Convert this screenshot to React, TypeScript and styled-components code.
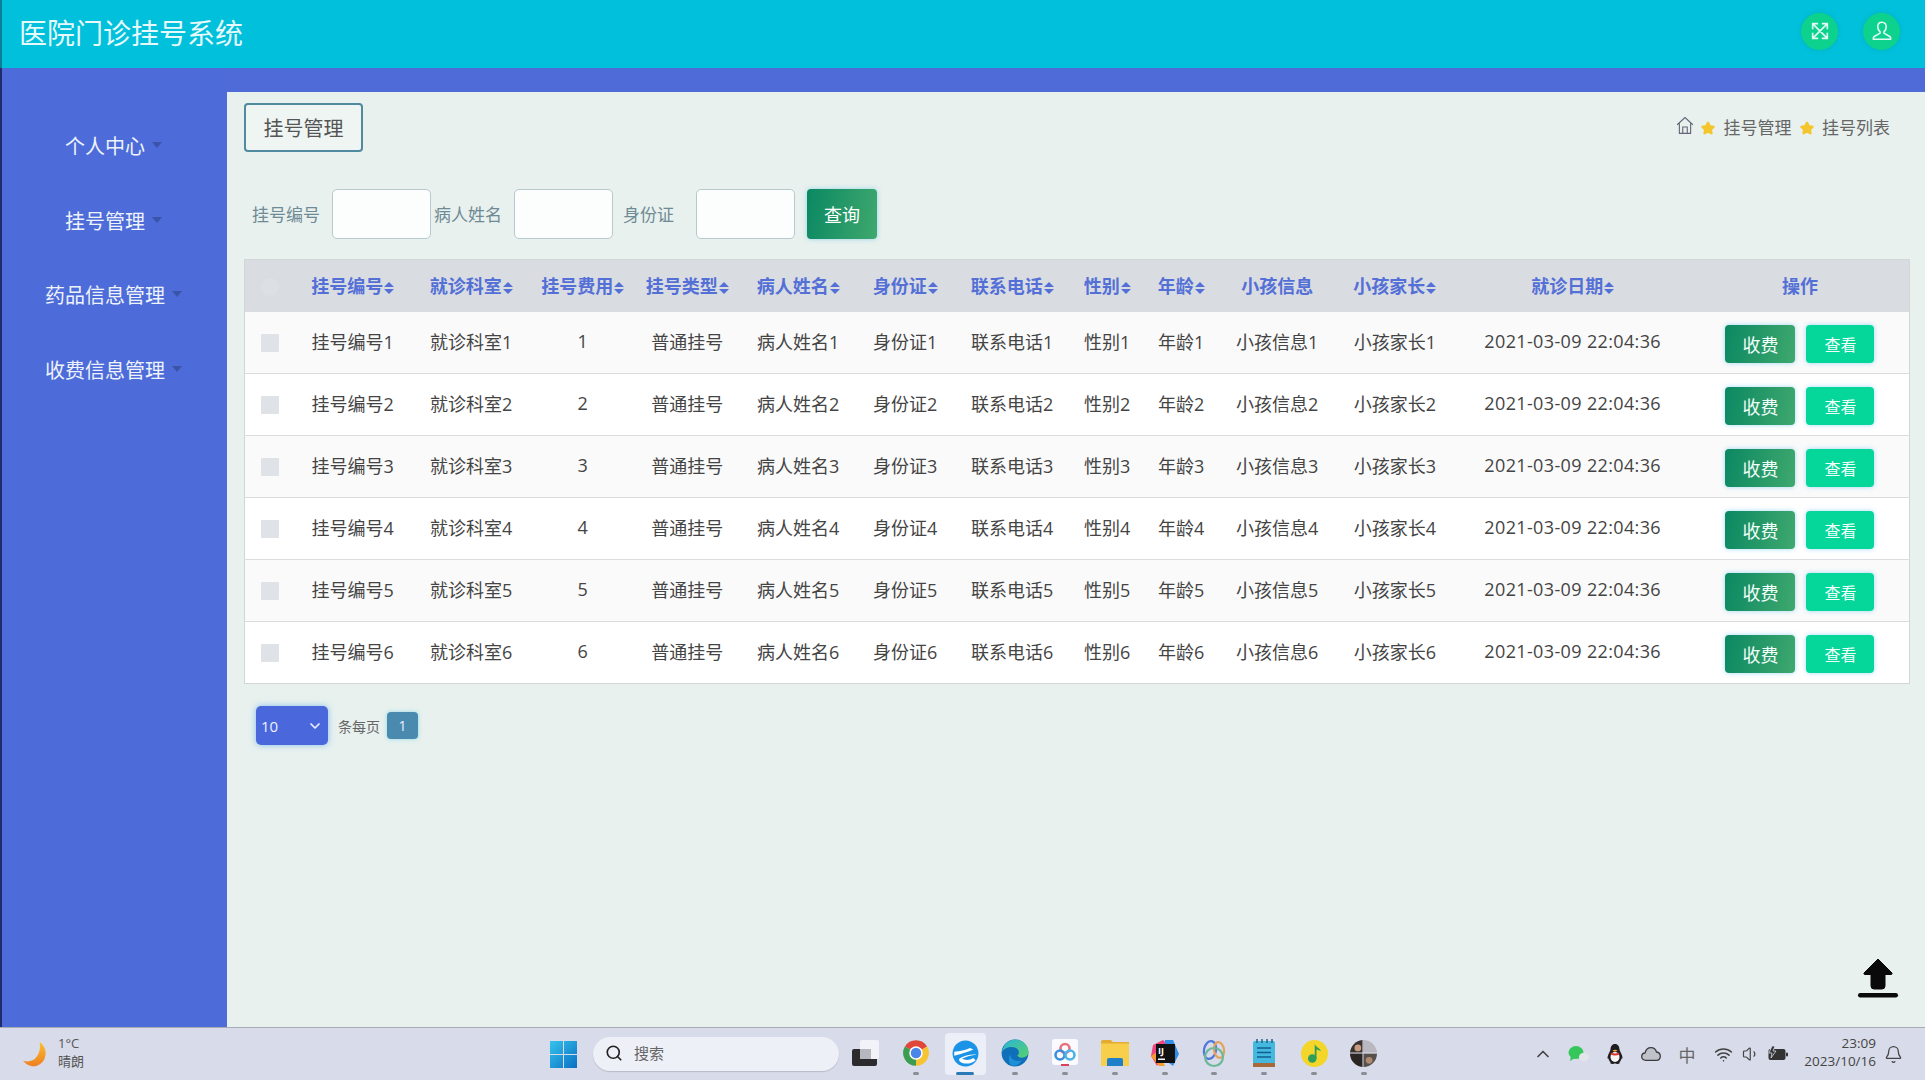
import React from "react";
import styled, { createGlobalStyle } from "styled-components";
import { Bell, ChevronDown, ChevronUp, Search, Volume1, Wifi } from "lucide-react";

const Global = createGlobalStyle`
  html, body { margin: 0; padding: 0; }
  body { width: 1925px; height: 1080px; overflow: hidden; font-family: "Open Sans", "Noto Sans CJK SC", sans-serif; }
  * { box-sizing: border-box; }
`;

const Page = styled.div`
  width: 1925px; height: 1080px; display: flex; flex-direction: column;
  background: #e8f1ee;
`;
const Header = styled.header`
  height: 68px; flex: none; display: flex; align-items: center; justify-content: space-between;
  background: #00c0dc; border-left: 2px solid #0a7f96; padding: 0 25px 0 17px;
`;
const Title = styled.h1`
  margin: 0 0 2px; font-size: 28px; font-weight: 400; color: #e6fafb; line-height: 38px;
`;
const HeaderActions = styled.div`
  display: flex; gap: 25px; margin-bottom: 6px;
`;
const RoundButton = styled.div`
  width: 37px; height: 37px; border-radius: 50%; background: #0cd28e;
  display: flex; align-items: center; justify-content: center;
  box-shadow: 0 0 4px rgba(10,170,150,.6);
`;
const Body = styled.div`
  flex: 1; min-height: 0; display: flex;
`;
const Sidebar = styled.nav`
  width: 227px; flex: none; background: #4d6cd9; border-left: 2px solid #1d2c6e;
  padding: 42px 0 0 0; display: flex; flex-direction: column;
`;
const MenuItem = styled.div`
  height: 74.5px; display: flex; align-items: center; justify-content: center; gap: 7px;
  color: #eef3fb; font-size: 20px; line-height: 28px; padding-right: 2px;
`;
const MenuCaret = styled.span`
  width: 0; height: 0; border-left: 5px solid transparent; border-right: 5px solid transparent;
  border-top: 6px solid #3a55a8; margin-bottom: 4px;
`;
const Main = styled.main`
  flex: 1; min-width: 0; display: flex; flex-direction: column; position: relative;
`;
const Strip = styled.div`
  height: 24px; background: #4f6bd8; flex: none;
`;
const Content = styled.div`
  flex: 1; padding: 11px 16px 0 17px; background: #e8f1ee;
`;
const PageHead = styled.div`
  display: flex; align-items: center; justify-content: space-between; height: 49px;
`;
const Tag = styled.div`
  width: 119px; height: 49px; display: flex; align-items: center; justify-content: center;
  border: 2px solid #4f8a9e; border-radius: 4px; background: #eef5f2;
  font-size: 20px; color: #555;
`;
const Crumbs = styled.div`
  display: flex; align-items: center; font-size: 17px; color: #666; padding-right: 19px;
`;
const HomeSlot = styled.span`
  display: flex; margin: 0 7px 4px 0;
`;
const CrumbText = styled.span`
  margin: 0 8px 0 8.500px; line-height: 20px;
  &:last-child { margin-right: 0; }
`;
const SearchRow = styled.div`
  display: flex; align-items: center; margin-top: 37px; padding-left: 8px; height: 50px;
`;
const FieldLabel = styled.label<{ $ml?: number; $w: number }>`
  font-size: 17px; color: #6f8a94; white-space: nowrap; margin-left: ${(p) => p.$ml ?? 0}px;
  width: ${(p) => p.$w}px; margin-right: 12px; line-height: 24px; padding-top: 2px;
`;
const FieldInput = styled.input`
  width: 99px; height: 50px; border: 1px solid #b9c8cc; border-radius: 5px; background: #fcfefd;
  padding: 0 8px; outline: none; flex: none;
`;
const PrimaryButton = styled.button`
  width: 70px; height: 50px; margin-left: 12px; border: 0; border-radius: 4px;
  background: linear-gradient(100deg, #0b8862, #3fa86e); color: #fff; font: inherit; font-size: 18px;
  box-shadow: 0 0 5px rgba(80,190,230,.55);
`;
const Table = styled.table`
  width: 1665px; margin-top: 20px; border-collapse: collapse; table-layout: fixed; background: #fff;
  border: 1px solid #d2d6d8; font-size: 18px; color: #444;
`;
const Col = styled.col<{ $w: number }>`
  width: ${(p) => p.$w}px;
`;
const HeadRow = styled.tr`
  height: 52px; background: #d9dde2;
`;
const Th = styled.th`
  padding: 0 0 1px; font-weight: 700; color: #5470d6; text-align: center; font-size: 18px; white-space: nowrap;
`;
const Row = styled.tr<{ $odd: boolean }>`
  height: 62px; background: ${(p) => (p.$odd ? "#fafafa" : "#fff")}; border-top: 1px solid #dadcde;
`;
const Td = styled.td<{ $date?: boolean }>`
  padding: 0 0 4px; text-align: center; white-space: nowrap; letter-spacing: ${(p) => (p.$date ? "0.36px" : "0")};
`;
const SortMark = styled.span`
  display: inline-flex; flex-direction: column; gap: 1.500px; vertical-align: 6px; margin-left: 1px;
  &::before, &::after {
    content: ""; width: 0; height: 0; border-left: 5px solid transparent; border-right: 5px solid transparent;
  }
  &::before { border-bottom: 5px solid #5470d6; }
  &::after { border-top: 5px solid #5470d6; }
`;
const Check = styled.span<{ $faint?: boolean }>`
  display: inline-block; width: 18px; height: 18px; vertical-align: middle; margin-left: 2px;
  border-radius: ${(p) => (p.$faint ? "50%" : "1px")};
  background: ${(p) => (p.$faint ? "#dcdfe4" : "#dfe2e7")};
`;
const RowActions = styled.div`
  display: flex; justify-content: center; gap: 11px; margin-top: 7px;
`;
const ActionButton = styled.button<{ $kind: "pay" | "view" }>`
  height: 38px; border: 0; border-radius: 4px; color: #f2fffa; padding: 0; font-family: inherit;
  width: ${(p) => (p.$kind === "pay" ? 70 : 68)}px;
  font-size: ${(p) => (p.$kind === "pay" ? 18 : 16)}px;
  background: ${(p) => (p.$kind === "pay" ? "linear-gradient(100deg, #0b8862, #3fa86e)" : "#05d69a")};
  box-shadow: 0 0 5px rgba(90,190,240,.55);
`;
const Pager = styled.div`
  display: flex; align-items: center; margin: 22px 0 0 12px; height: 39px;
`;
const PageSize = styled.div`
  width: 72px; height: 39px; border-radius: 5px; background: #4a68dc; color: #eef2ff; font-size: 15px;
  display: flex; align-items: center; justify-content: space-between; padding: 0 5px;
  box-shadow: 0 0 6px rgba(90,170,240,.7);
`;
const PagerText = styled.span`
  margin: 0 7px 0 10px; font-size: 14px; color: #666;
`;
const PageNum = styled.div`
  width: 31px; height: 27px; border-radius: 4px; background: #4a8aae; color: #eef; font-size: 14px;
  display: flex; align-items: center; justify-content: center; box-shadow: 0 0 4px rgba(90,200,230,.6);
`;
const BackTop = styled.div`
  position: absolute; right: 24px; bottom: 27px; width: 46px; height: 44px;
`;
const Taskbar = styled.footer`
  height: 53px; flex: none; display: grid; grid-template-columns: 550px auto 1fr; align-items: center;
  background: #d8dbe9; border-top: 1px solid #a9adb3;
`;
const Weather = styled.div`
  display: flex; align-items: center; gap: 10px; padding-left: 23px;
`;
const TwoLines = styled.div<{ $right?: boolean }>`
  display: flex; flex-direction: column; gap: 1px; font-size: 13px; line-height: 17px; color: #555;
  margin-bottom: 4px; text-align: ${(p) => (p.$right ? "right" : "left")};
`;
const TaskCenter = styled.div`
  display: flex; align-items: center;
`;
const SearchBox = styled.div`
  width: 246px; height: 34px; margin: 0 2px 0 16px; border-radius: 17px; background: #eef0f8;
  box-shadow: 0 1px 1px #b8bcc8; display: flex; align-items: center; gap: 11px; padding: 0 0 3px 12px;
  font-size: 15px; color: #666;
`;
const AppSlot = styled.div<{ $active?: boolean; $dot?: boolean }>`
  width: 49.800px; height: 42px; position: relative; display: flex; align-items: center; justify-content: center;
  padding-bottom: 2px; border-radius: 4px;
  &::before {
    content: ""; position: absolute; inset: 0 4px; border-radius: 4px;
    background: ${(p) => (p.$active ? "#eceef8" : "transparent")};
  }
  & > svg { position: relative; }
  &::after {
    content: ""; display: ${(p) => (p.$dot ? "block" : "none")}; position: absolute; bottom: 0; left: 50%; transform: translateX(-50%);
    height: 3px; border-radius: 2px; width: ${(p) => (p.$active ? 18 : 6)}px;
    background: ${(p) => (p.$active ? "#2a7ab8" : "#8a8e96")};
  }
`;
const Tray = styled.div`
  display: flex; align-items: center; justify-content: flex-end; padding-right: 15px;
`;
const TraySlot = styled.div<{ $w: number; $light?: boolean }>`
  width: ${(p) => p.$w}px; display: flex; align-items: center; justify-content: center;
  color: ${(p) => (p.$light ? "#666" : "#444")};
  font-size: 17px;
`;
const Clock = styled(TwoLines)`
  width: 81px; color: #444; font-size: 13.500px; align-items: flex-end; white-space: nowrap;
`;

const cols = [49, 118.5, 118.5, 104.5, 104.5, 117.5, 96.5, 117.5, 72.5, 75.5, 116.5, 118.7, 237, 218];
const heads: [string, boolean][] = [
  ["挂号编号", true], ["就诊科室", true], ["挂号费用", true], ["挂号类型", true], ["病人姓名", true],
  ["身份证", true], ["联系电话", true], ["性别", true], ["年龄", true], ["小孩信息", false], ["小孩家长", true],
  ["就诊日期", true], ["操作", false],
];
const rows = [1, 2, 3, 4, 5, 6];

const Star = () => (
  <svg width="14" height="14" viewBox="0 0 24 24"><path d="M12 3l3 6 6.500 1-4.700 4.600 1.100 6.400-5.900-3-5.900 3 1.100-6.400L2.500 10 9 9z" fill="#f5c52e" stroke="#f5c52e" strokeWidth="4" strokeLinejoin="round" /></svg>
);
const ExpandIcon = () => (
  <svg width="22" height="22" viewBox="0 0 24 24" fill="none" stroke="#dffaf4" strokeWidth="1.800"><path d="M4 4l16 16M20 4L4 20M4 10V4h6M14 4h6v6M20 14v6h-6M10 20H4v-6" /></svg>
);
const UserIcon = () => (
  <svg width="22" height="22" viewBox="0 0 24 24" fill="none" stroke="#dffaf4" strokeWidth="1.800"><path d="M12 2.500c-3 0-4.600 2.200-4.600 5 0 2.400 1 4 2.300 5.200.5.500.4 1.500-.2 1.900L3.500 18c-1 .6-1 1.200-1 3h19c0-1.800 0-2.400-1-3l-6-3.400c-.6-.4-.7-1.400-.2-1.900 1.300-1.200 2.300-2.800 2.300-5.200 0-2.800-1.600-5-4.600-5z" strokeLinejoin="round" /></svg>
);
const HomeIcon = () => (
  <svg width="18" height="19" viewBox="0 0 24 24" fill="none" stroke="#667" strokeWidth="1.500"><path d="M1.500 11L12 1.500 22.500 11M4.500 9v13.500h15V9M9 22.500V14h6v8.500" /></svg>
);
const MoonIcon = () => (
  <svg width="25" height="25" viewBox="0 0 24 24"><defs><linearGradient id="moon" x1="0" y1="0" x2="0" y2="1"><stop offset="0" stopColor="#fbc02d" /><stop offset="1" stopColor="#ee7f22" /></linearGradient></defs><path d="M16 0c5 4 7 9 5 15-2 6-8 9-13 8-3-.5-6-2.500-8-5 5 1.500 10 .5 13-3.500 3-4 4-9 3-14.500z" fill="url(#moon)" /></svg>
);
const WinIcon = () => (
  <svg width="27" height="27" viewBox="0 0 27 27"><defs><linearGradient id="win" x1="0" y1="0" x2="1" y2="1"><stop offset="0" stopColor="#35c4ec" /><stop offset="1" stopColor="#0a6fc4" /></linearGradient></defs><path d="M0 0h13v13H0zM14 0h13v13H14zM0 14h13v13H0zM14 14h13v13H14z" fill="url(#win)" /></svg>
);
const TaskViewIcon = () => (
  <svg width="27" height="27" viewBox="0 0 27 27"><rect x="8" y="0" width="19" height="19" rx="2" fill="#f2f3f8" /><path d="M2 9h17v10h6v5a2 2 0 0 1-2 2H2a2 2 0 0 1-2-2V11a2 2 0 0 1 2-2z" fill="#2b2b2e" /><rect x="8" y="9" width="11" height="10" fill="#b6b8c0" /></svg>
);
const ChromeIcon = () => (
  <svg width="28" height="28" viewBox="0 0 24 24"><path d="M12 12L2.470 6.500A11 11 0 0 1 21.530 6.500Z" fill="#e0463a" /><path d="M12 12L21.530 6.500A11 11 0 0 1 12 23Z" fill="#f6c433" /><path d="M12 12L12 23A11 11 0 0 1 2.470 6.500Z" fill="#3c9d50" /><circle cx="12" cy="12" r="5.800" fill="#fff" /><circle cx="12" cy="12" r="4.500" fill="#4a86e8" /></svg>
);
const BlueEIcon = () => (
  <svg width="27" height="27" viewBox="0 0 24 24"><circle cx="12" cy="12" r="11.500" fill="#1b93e6" /><path d="M2 10.500c5-1 10-1.500 14-3.500l3 1.500c-5 2.500-10 3.500-17 5.500zM22 13c-5 .5-9 1.500-13 3.500 3 2 7 1.500 10-.5l2 2c-4 3.500-10 4-14 1-1-.8-1-2 0-2.700 4-2.800 10-3.800 15-3.300z" fill="#fff" /></svg>
);
const EdgeIcon = () => (
  <svg width="28" height="28" viewBox="0 0 24 24"><defs><linearGradient id="edgeTop" x1="0" y1="0" x2="1" y2="1"><stop offset="0" stopColor="#2bb5d8" /><stop offset="1" stopColor="#57d16a" /></linearGradient></defs><circle cx="12" cy="12" r="11.500" fill="#0f6fb8" /><path d="M1 11C2 5 6.500.5 12 .5c6.500 0 11.500 5 11.500 10.500 0 3.500-2.500 5-6 5-2 0-3.500-1-3.500-2 2-1 2-5-1.500-6.500C8 6 3 7.500 1 11z" fill="url(#edgeTop)" /><path d="M8 13c0 5 6 7 10 5-2 3-4.500 5-7 5-4 0-5.500-5.500-3-10z" fill="#1f8fd8" /></svg>
);
const CloudRingsIcon = () => (
  <svg width="26" height="28" viewBox="0 0 26 28"><rect width="26" height="26" rx="3" fill="#fbfbff" /><g fill="none" strokeWidth="2.600"><circle cx="13" cy="9.500" r="4.500" stroke="#e5727c" /><circle cx="8" cy="16" r="4.500" stroke="#3b8fe0" /><circle cx="18" cy="16" r="4.500" stroke="#48b4e8" /></g><rect x="9" y="25" width="8" height="2" fill="#d9425a" /></svg>
);
const FolderIcon = () => (
  <svg width="28" height="26" viewBox="0 0 28 26"><path d="M0 2a2 2 0 0 1 2-2h8l2 2.500H0z" fill="#e5a92c" /><rect y="2" width="28" height="24" fill="#f8cf4b" /><rect y="2" width="28" height="1.500" fill="#e3ac33" /><path d="M6 26v-6a2 2 0 0 1 2-2h12a2 2 0 0 1 2 2v6z" fill="#1f7fc9" /></svg>
);
const IdeaIcon = () => (
  <svg width="28" height="27" viewBox="0 0 28 27"><path d="M2 5l10-5 6 6-12 20L0 16z" fill="#f0457d" /><path d="M14 0h8l6 14-6 12-8-6z" fill="#2f8fe8" /><path d="M0 16l8 10h6L6 12z" fill="#f59a2c" /><rect x="5" y="4" width="19" height="19" fill="#111" /><text x="7" y="14" fill="#fff" fontSize="9" fontWeight="700" fontFamily="Open Sans, sans-serif">IJ</text><rect x="7" y="18.500" width="7" height="1.500" fill="#fff" /></svg>
);
const RingsIcon = () => (
  <svg width="26" height="29" viewBox="0 0 26 29" fill="none" strokeWidth="2.200"><ellipse cx="9" cy="11" rx="6" ry="9" stroke="#5078dc" transform="rotate(12 9 11)" /><ellipse cx="18" cy="11" rx="5" ry="8" stroke="#e5a35a" transform="rotate(-10 18 11)" /><circle cx="13" cy="18" r="9" stroke="#6cb99a" /></svg>
);
const NotesIcon = () => (
  <svg width="22" height="28" viewBox="0 0 22 28"><rect y="2" width="22" height="23" rx="2" fill="#45b8e0" /><rect y="24" width="22" height="4" fill="#a5693a" /><path d="M4 0v4M9 0v4M14 0v4M19 0v4" stroke="#2b5f80" strokeWidth="1.500" /><path d="M4 9h14M4 13.500h14M4 18h14" stroke="#0f5f8e" strokeWidth="1.600" /></svg>
);
const MusicIcon = () => (
  <svg width="27" height="27" viewBox="0 0 24 24"><circle cx="12" cy="12" r="12" fill="#f4d52a" /><circle cx="10" cy="16.500" r="3.800" fill="#2f9e5a" /><path d="M12.200 16.500V3.500c1 3 5 3.500 5.500 6.500-1.500-1-3.500-1.500-3.900-1.300V16.500z" fill="#2f9e5a" /></svg>
);
const AvatarIcon = () => (
  <svg width="27" height="27" viewBox="0 0 24 24"><clipPath id="av"><circle cx="12" cy="12" r="12" /></clipPath><g clipPath="url(#av)"><rect width="12" height="12" fill="#3a3230" /><rect x="12" width="12" height="12" fill="#b9b8c0" /><rect y="12" width="12" height="12" fill="#2b2624" /><rect x="12" y="12" width="12" height="12" fill="#57514c" /><circle cx="7" cy="7" r="3" fill="#c89a80" /><circle cx="17" cy="18" r="3" fill="#b08a70" /><path d="M11.500 0v24M0 11.500h24" stroke="#d8dbe9" strokeWidth=".8" /></g></svg>
);
const WeChatIcon = () => (
  <svg width="22" height="16" viewBox="0 0 22 16"><ellipse cx="8" cy="6.500" rx="7.500" ry="6.500" fill="#35c75a" /><path d="M3 10l-1 5 5-3z" fill="#35c75a" /><ellipse cx="16" cy="11" rx="5" ry="4.200" fill="#e3e5ea" /></svg>
);
const PenguinIcon = () => (
  <svg width="16" height="20" viewBox="0 0 16 20"><path d="M8 0c3 0 4.500 2.500 4.500 5.500 0 1 1.500 3 2.500 6 .8 2.500.5 3.500-.5 3-.5 2-1 3-2 3.500.5 1 0 2-2 2-1 0-1.500-.5-2.500-.5S6.500 20 5.500 20c-2 0-2.500-1-2-2-1-.5-1.500-1.500-2-3.500-1 .5-1.300-.5-.5-3 1-3 2.500-5 2.500-6C3.500 2.500 5 0 8 0z" fill="#1e1e22" /><ellipse cx="8" cy="13" rx="4.500" ry="5" fill="#f8f4f2" /><path d="M4 8.500c2.500 1.200 5.500 1.200 8 0l.5 2c-3 1.400-6 1.400-9 0z" fill="#d9342c" /><path d="M5.500 6.500c1.500-1 3.500-1 5 0-1.500 1.500-3.500 1.500-5 0z" fill="#f0a82c" /></svg>
);
const CloudIcon = () => (
  <svg width="20" height="14" viewBox="0 0 20 14"><path d="M5 13.300C2 13.300.7 11.500.7 9.500c0-2 1.500-3.400 3.300-3.500C4.800 2.800 7 .7 10 .7c2.800 0 4.800 1.800 5.500 4.300 2.200.3 3.800 2 3.800 4.200 0 2.300-1.600 4.100-4 4.100z" fill="#bfc2c9" stroke="#3a3a3e" strokeWidth="1.300" /></svg>
);
const BatteryIcon = () => (
  <svg width="20" height="16" viewBox="0 0 20 16"><rect x="0.500" y="3" width="17" height="11" rx="2" fill="#333" /><rect x="18" y="6.500" width="2" height="4" rx="1" fill="#333" /><path d="M4 0L1 7h3l-1 5 5-7H5l2-5z" fill="#333" stroke="#d8dbe9" strokeWidth=".8" /></svg>
);
const UploadIcon = () => (
  <svg width="46" height="44" viewBox="0 0 46 44"><path d="M23 3L37 17a1 1 0 0 1-1 1.500H30V30a3 3 0 0 1-3 3H19a3 3 0 0 1-3-3V18.500H10A1 1 0 0 1 9 17z" fill="#0a0a0a" stroke="#0a0a0a" strokeLinejoin="round" /><rect x="3" y="37" width="40" height="4.500" rx="2.200" fill="#0a0a0a" /></svg>
);

const apps = [
  <ChromeIcon key="chrome" />, <BlueEIcon key="e" />, <EdgeIcon key="edge" />, <CloudRingsIcon key="cloud" />, <FolderIcon key="folder" />,
  <IdeaIcon key="idea" />, <RingsIcon key="rings" />, <NotesIcon key="notes" />, <MusicIcon key="music" />, <AvatarIcon key="avatar" />,
];

export default function App() {
  return (
    <Page>
      <Global />
      <Header>
        <Title>医院门诊挂号系统</Title>
        <HeaderActions>
          <RoundButton><ExpandIcon /></RoundButton>
          <RoundButton><UserIcon /></RoundButton>
        </HeaderActions>
      </Header>
      <Body>
        <Sidebar>
          {["个人中心", "挂号管理", "药品信息管理", "收费信息管理"].map((m) => (
            <MenuItem key={m}>{m}<MenuCaret /></MenuItem>
          ))}
        </Sidebar>
        <Main>
          <Strip />
          <Content>
            <PageHead>
              <Tag>挂号管理</Tag>
              <Crumbs>
                <HomeSlot><HomeIcon /></HomeSlot>
                <Star />
                <CrumbText>挂号管理</CrumbText>
                <Star />
                <CrumbText>挂号列表</CrumbText>
              </Crumbs>
            </PageHead>
            <SearchRow>
              <FieldLabel $w={68}>挂号编号</FieldLabel>
              <FieldInput />
              <FieldLabel $w={68} $ml={3}>病人姓名</FieldLabel>
              <FieldInput />
              <FieldLabel $w={61} $ml={10}>身份证</FieldLabel>
              <FieldInput />
              <PrimaryButton>查询</PrimaryButton>
            </SearchRow>
            <Table>
              <colgroup>
                {cols.map((w, i) => <Col key={i} $w={w} />)}
              </colgroup>
              <thead>
                <HeadRow>
                  <Th><Check $faint /></Th>
                  {heads.map(([h, sort]) => (
                    <Th key={h}>{h}{sort && <SortMark />}</Th>
                  ))}
                </HeadRow>
              </thead>
              <tbody>
                {rows.map((n) => (
                  <Row key={n} $odd={n % 2 === 1}>
                    <Td><Check /></Td>
                    <Td>挂号编号{n}</Td>
                    <Td>就诊科室{n}</Td>
                    <Td>{n}</Td>
                    <Td>普通挂号</Td>
                    <Td>病人姓名{n}</Td>
                    <Td>身份证{n}</Td>
                    <Td>联系电话{n}</Td>
                    <Td>性别{n}</Td>
                    <Td>年龄{n}</Td>
                    <Td>小孩信息{n}</Td>
                    <Td>小孩家长{n}</Td>
                    <Td $date>2021-03-09 22:04:36</Td>
                    <Td>
                      <RowActions>
                        <ActionButton $kind="pay">收费</ActionButton>
                        <ActionButton $kind="view">查看</ActionButton>
                      </RowActions>
                    </Td>
                  </Row>
                ))}
              </tbody>
            </Table>
            <Pager>
              <PageSize>10<ChevronDown size={16} strokeWidth={2.5} /></PageSize>
              <PagerText>条每页</PagerText>
              <PageNum>1</PageNum>
            </Pager>
          </Content>
          <BackTop><UploadIcon /></BackTop>
        </Main>
      </Body>
      <Taskbar>
        <Weather>
          <MoonIcon />
          <TwoLines><span>1°C</span><span>晴朗</span></TwoLines>
        </Weather>
        <TaskCenter>
          <WinIcon />
          <SearchBox><Search size={18} color="#222" strokeWidth={2.2} />搜索</SearchBox>
          <AppSlot><TaskViewIcon /></AppSlot>
          {apps.map((a, i) => (
            <AppSlot key={i} $dot $active={i === 1}>{a}</AppSlot>
          ))}
        </TaskCenter>
        <Tray>
          <TraySlot $w={36}><ChevronUp size={20} strokeWidth={2} /></TraySlot>
          <TraySlot $w={36}><WeChatIcon /></TraySlot>
          <TraySlot $w={36}><PenguinIcon /></TraySlot>
          <TraySlot $w={36}><CloudIcon /></TraySlot>
          <TraySlot $w={36} $light>中</TraySlot>
          <TraySlot $w={36}><Wifi size={19} /></TraySlot>
          <TraySlot $w={20}><Volume1 size={18} strokeWidth={1.6} /></TraySlot>
          <TraySlot $w={34}><BatteryIcon /></TraySlot>
          <Clock $right><span>23:09</span><span>2023/10/16</span></Clock>
          <TraySlot $w={34}><Bell size={19} strokeWidth={1.6} /></TraySlot>
        </Tray>
      </Taskbar>
    </Page>
  );
}
